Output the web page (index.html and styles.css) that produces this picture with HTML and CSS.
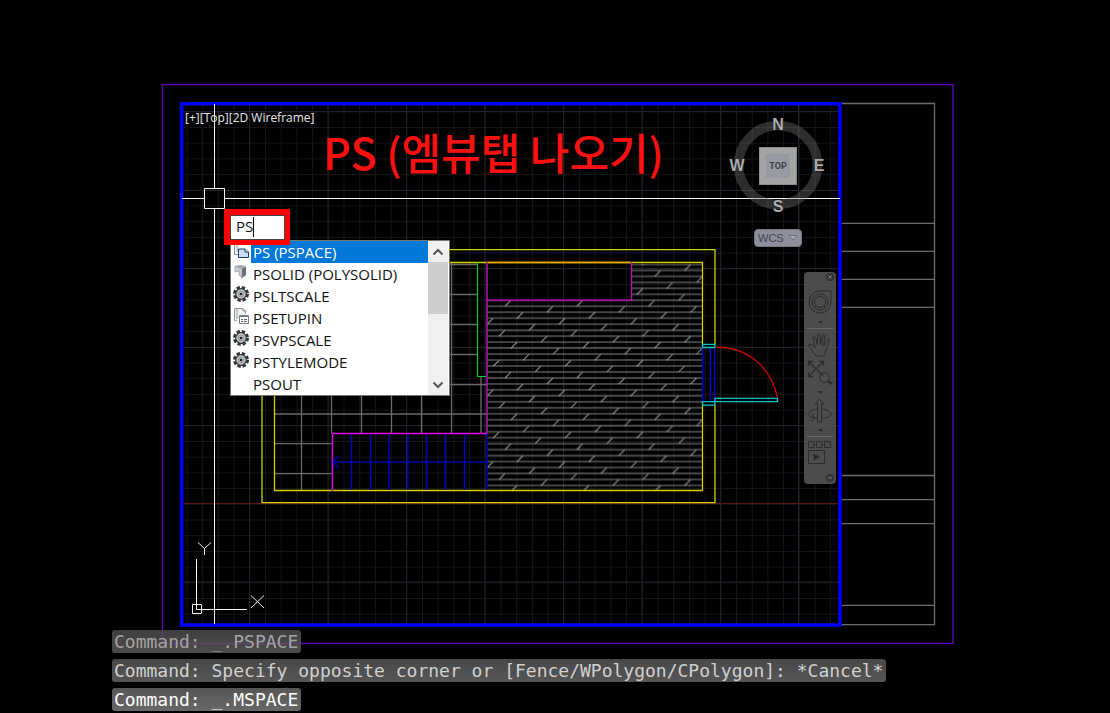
FILE: index.html
```html
<!DOCTYPE html>
<html lang="en">
<head>
<meta charset="utf-8">
<title>Layout viewport</title>
<link rel="stylesheet" href="styles.css">
</head>
<body>
<main class="stage">
  <svg class="drawing" aria-hidden="true">
    <defs>
      <pattern id="minor" x="186.5" y="111.3" width="15.7" height="15.7" patternUnits="userSpaceOnUse">
        <path d="M0 .5H15.7M.5 0V15.7" stroke="#15151b" stroke-width="1" fill="none"/>
      </pattern>
      <pattern id="planks" x="505" y="297.3" width="71.8" height="71.68" patternUnits="userSpaceOnUse">
        <g stroke="#848484" fill="none">
          <path stroke-width="1.4" d="M0 3H72M0 8.97H72M0 14.95H72M0 20.9H72M0 26.9H72M0 32.9H72M0 38.8H72M0 44.8H72M0 50.8H72M0 56.8H72M0 62.7H72M0 68.7H72"/>
          <path stroke="#a0a0a0" stroke-width="1.2" d="M0 9l6-6M41.9 15l6-6M12 21l6-6M53.9 27l6-6M24 33l6-6M65.8 39l6-6M36 45l6-6M6 51l6-6M47.9 57l6-6M18 63l6-6M59.9 69l6-6M30 74.700l6-6M30 3l6-6"/>
        </g>
      </pattern>
    </defs>

    <rect class="sheet" x="162.5" y="84.5" width="790.5" height="559"/>
    <path class="title-block" d="M842 103.5H934.5V624.7H842M842 223.3H934.5M842 251.3H934.5M842 279.3H934.5M842 307.3H934.5M842 475.5H934.5M842 499.7H934.5M842 523.7H934.5M842 605.3H934.5"/>

    <rect x="183" y="105" width="656" height="519" fill="url(#minor)"/>
    <path class="grid-major" d="M249.5 105V624M328 105V624M406.5 105V624M485 105V624M563.5 105V624M642 105V624M720.5 105V624M798.5 105V624M183 111.5H839M183 190.5H839M183 268.5H839M183 347.5H839M183 425.5H839M183 582H839"/>
    <path class="axis" d="M183 503.5H839"/>

    <path class="tile" d="M301.5 262V490M331.5 262V433M361.5 262V433M391.5 262V433M421.5 262V433M451.5 262V433M481 377V433M274 264.5H477M274 294.5H477M274 324.5H477M274 354.5H477M274 384.5H487M274 414H487M274 443.7H332M274 473.6H332"/>
    <path fill="url(#planks)" d="M487 300H631V264H702V490H487Z"/>
    <path class="wall" d="M715 344V249.7H262V502.7H715V405M702.5 344V262.5H274.5V490.5H702.5V405"/>
    <path class="lintel" d="M487 262.5H631"/>
    <path class="cabinet" d="M487 262V433M487 300.3H631.5V262"/>
    <path class="stair-edge" d="M487 433.5H332.4V491"/>
    <path class="stair" d="M351.5 434V490M370.5 434V490M389 434V490M407.8 434V490M426.5 434V490M445.5 434V490M464.5 434V490M487 434V490"/>
    <path class="stair-arrow" d="M487 462H333M339 456L333 462L339 468"/>
    <path class="panel" d="M477.5 262V376.5H486"/>
    <path class="leaf-jamb" d="M702.5 347V402M710.3 347V402M714.7 347V402"/>
    <path class="leaf" d="M702.5 344.3H714.8V347.5H702.5ZM702.5 401.7H714.8V405.2H702.5ZM715 398.3H777.5V401.6H715Z"/>
    <path class="swing" d="M715 347.3C748 346 772 369 777.5 398"/>

    <rect class="frame" x="181.7" y="103.7" width="658.3" height="521.3"/>
    <path class="cross" d="M214.5 104V188M214.5 209V624M182 198.5H204M225 198.5H840M204.5 188.5H224.5V208.5H204.5Z"/>
    <path class="cross" d="M192.5 604.5H201.5V613.5H192.5ZM196.5 559V609.5H247M198 542.5L204.5 548.5L211 542.5M204.5 548.5V555M251 595.5L264 608M264 595.5L251 608"/>
  </svg>

  <nav class="view-label" aria-label="Viewport controls"><button>[+]</button><button>[Top]</button><button>[2D Wireframe]</button></nav>
  <h1 class="caption">PS (엠뷰탭 나오기)</h1>

  <div class="compass">
    <svg class="ring" viewBox="0 0 90 90" aria-hidden="true"><circle cx="45" cy="45" r="39.5" fill="none" stroke="#777" stroke-opacity=".38" stroke-width="9.6"/></svg>
    <button class="dir north">N</button>
    <button class="dir west">W</button>
    <button class="cube"><span class="cube-face">TOP</span></button>
    <button class="dir east">E</button>
    <button class="dir south">S</button>
  </div>
  <button class="wcs">WCS <svg width="10" height="6" viewBox="0 0 10 6" aria-hidden="true"><path d="M1 .5H9L5 5Z" fill="#aaaab4" stroke="#70707c"/></svg></button>

  <aside class="navbar" aria-label="Navigation bar">
    <svg class="nav-art" viewBox="0 0 32 212" aria-hidden="true">
      <g fill="none" stroke="#2c2c2c" stroke-width="1">
        <circle cx="26" cy="5" r="3.6" fill="#3a3a3a"/><path stroke="#777" d="M24.5 3.500l3 3m0-3l-3 3"/>
        <path d="M16 19H27V30A11 11 0 1 1 16 19Z"/><circle cx="16" cy="30" r="8"/><circle cx="16" cy="30" r="5.500"/><path d="M10 36l2-2M22 36l-2-2"/>
        <path stroke="#686868" d="M3 56.500H29M3 164.500H29"/>
        <path d="M11 82C8 79 7 76 5 74C3.500 72 6 71.500 8 73L11 76L9 66C9 63.500 11 64 11.500 66L13.500 73L13.500 63C14 61 16 61 16 63L16.500 73L18.500 64C19 62 21 62.500 20.700 65L19.500 74L23 68C24.500 66 26.500 67 25.500 69L21.500 79C21 82 20 83 19.500 84H12Z"/>
        <path stroke-width="1.300" d="M5 90L19 104M19 90L5 104M4.500 94V89.500H9M15 89.500H19.500V94M4.500 100V104.500H9"/>
        <circle cx="20.500" cy="105.500" r="5"/><path stroke-width="2.500" d="M24 109L28 112"/>
        <path d="M13.500 150V132H11L15.500 127L20 132H17.500V150ZM13 137C7 138 4 140 4 142C5 145 10 146 13 146M18 137C24 138 27 140 27 142C26 145 22 146 18 146M7 141L11 146L7 149"/>
        <path d="M4.500 169.500H10V175.500H4.500ZM12.500 169.500H18V175.500H12.500ZM20.500 169.500H26.500V175.500H20.500ZM4.500 178.500H20.500V191.500H4.500Z"/>
        <circle cx="26" cy="206" r="3.600" fill="#3a3a3a"/><path stroke="#777" d="M24 206H28"/>
      </g>
      <path fill="#2a2a2a" d="M14 49h5l-2.500 3zM14 119h5l-2.500 3zM14 157h5l-2.500 3zM9.500 181.500l6.500 3.500l-6.500 3.500z"/>
    </svg>
  </aside>

  <section class="prompt" aria-label="Command entry">
    <div class="entry"><input class="entry-text" aria-label="Command" value="PS"><span class="caret"></span></div>
    <div class="suggest">
      <ul class="options">
        <li><button class="option selected"><svg class="icon" viewBox="0 0 16 16"><path d="M1.500 0V12.500H5M4 0V9.500" fill="none" stroke="#8b929b"/><path d="M5.500 7H12L15.500 10V15.500H5.500Z" fill="#c9defa" stroke="#1e355e"/><path d="M12 7V10H15.500" fill="#fff" stroke="#1e355e"/></svg><span>PS (PSPACE)</span></button></li>
        <li><button class="option"><svg class="icon" viewBox="0 0 16 16"><path d="M2 2L7 1L13 2L9 4.500V14L6 11V6L2 8Z" fill="#a4a9ae"/><path d="M9 4.500L13 2.500V11L9 14Z" fill="#686e76"/><path d="M2 2L9 4.500V14L6 11V7L2 8Z" fill="#c9ced3" stroke="#8d9298" stroke-width=".6"/></svg><span>PSOLID (POLYSOLID)</span></button></li>
        <li><button class="option"><svg class="icon" viewBox="0 0 16 16"><use href="#gear"/></svg><span>PSLTSCALE</span></button></li>
        <li><button class="option"><svg class="icon" viewBox="0 0 16 16"><path d="M3.500 12.500H1.500V.5H10L12.500 3V6M4 .5V11M10 .5V3H12.500" fill="#f2f3f4" stroke="#8b929b"/><path d="M6.500 7.500H15.500V15.500H6.500Z" fill="#fff" stroke="#737a84"/><path d="M6 8.500H16" stroke="#737a84"/><path d="M8 11.500H10M11 11.500H14M8 13.500H10M11 13.500H14" stroke="#555d68"/></svg><span>PSETUPIN</span></button></li>
        <li><button class="option"><svg class="icon" viewBox="0 0 16 16"><use href="#gear"/></svg><span>PSVPSCALE</span></button></li>
        <li><button class="option"><svg class="icon" viewBox="0 0 16 16"><use href="#gear"/></svg><span>PSTYLEMODE</span></button></li>
        <li><button class="option"><span class="icon"></span><span>PSOUT</span></button></li>
      </ul>
      <div class="scroll">
        <button class="scroll-step" aria-label="Scroll up"><svg width="12" height="8" viewBox="0 0 12 8"><path d="M1.500 6.500L6 2L10.500 6.500" fill="none" stroke="#555" stroke-width="2"/></svg></button>
        <div class="thumb"></div>
        <button class="scroll-step last" aria-label="Scroll down"><svg width="12" height="8" viewBox="0 0 12 8"><path d="M1.500 1.500L6 6L10.500 1.500" fill="none" stroke="#555" stroke-width="2"/></svg></button>
      </div>
    </div>
  </section>

  <svg class="symbols" aria-hidden="true"><defs><g id="gear"><circle cx="8" cy="8" r="6.400" fill="none" stroke="#333538" stroke-width="3.200" stroke-dasharray="3.200 1.826"/><circle cx="8" cy="8" r="5.300" fill="#c6c9cd" stroke="#333538" stroke-width="1.200"/><circle cx="8" cy="8" r="3" fill="#b4b7bb" stroke="#8d9094" stroke-width=".8"/><circle cx="8" cy="8" r="1.300" fill="#222"/></g></defs></svg>

  <div class="history">
    <output class="line old">Command: _.PSPACE</output>
    <output class="line recent">Command: Specify opposite corner or [Fence/WPolygon/CPolygon]: *Cancel*</output>
    <output class="line">Command: _.MSPACE</output>
  </div>
</main>
</body>
</html>
```

FILE: styles.css
```css
* { box-sizing: border-box; }
body { margin: 0; background: #000; color: #fff; font-family: "Open Sans", "Noto Sans CJK KR", sans-serif; }
button { margin: 0; padding: 0; border: 0; background: none; color: inherit; font: inherit; }

.stage { position: relative; display: flex; flex-direction: column; justify-content: flex-end; min-height: 100vh; overflow: hidden; }
.drawing { position: absolute; inset: 0; width: 100%; height: 100%; }
.drawing path, .drawing > rect { stroke-width: 1; }
.drawing > path:not([fill]), .sheet, .frame { fill: none; }
.drawing > .sheet { stroke: #6200b8; stroke-width: 1.4; }
.drawing > .title-block { stroke: #6c6c6c; stroke-width: 1.3; }
.grid-major { stroke: #20212b; }
.drawing > .axis { stroke: #5c1616; }
.drawing > .tile { stroke: #6a6a6a; stroke-width: 1.3; }
.drawing > .wall { stroke: #d2d200; stroke-width: 1.3; }
.drawing > .lintel { stroke: #f0a800; stroke-width: 1.4; }
.drawing > .cabinet { stroke: #b414b4; stroke-width: 1.5; }
.drawing > .stair-edge { stroke: #e400f0; stroke-width: 1.4; }
.drawing > .stair { stroke: #0000c8; stroke-width: 1.4; }
.drawing > .stair-arrow { stroke: #0000b0; stroke-width: 1.5; }
.drawing > .panel { stroke: #00d020; stroke-width: 1.2; }
.drawing > .leaf-jamb { stroke: #0000d8; stroke-width: 1.4; }
.drawing > .leaf { stroke: #00c8c8; stroke-width: 1.3; }
.drawing > .swing { stroke: #c80000; stroke-width: 1.3; }
.drawing > .frame { stroke: #00f; stroke-width: 3.5; }
.cross { stroke: #f4f4f4; }

.view-label { position: absolute; left: 185px; top: 110px; display: flex; font-size: 12px; line-height: 16px; color: #e8e8e8; }
.caption { position: absolute; left: 323px; top: 120px; margin: 0; font: 500 43px/62px "Noto Sans CJK KR", sans-serif; color: #ff1010; white-space: nowrap; }

.compass { position: absolute; left: 728px; top: 116px; display: grid; grid-template-columns: 18px 64px 18px; grid-template-rows: 18px 64px 18px; place-items: center; }
.ring { position: absolute; left: 5px; top: 4px; width: 90px; height: 90px; }
.dir { position: relative; font: bold 16px/18px "Liberation Sans", sans-serif; color: #acacac; text-shadow: 0 0 1px #000; }
.north { grid-area: 1 / 2; }
.west { grid-area: 2 / 1; }
.east { grid-area: 2 / 3; }
.south { grid-area: 3 / 2; }
.cube { grid-area: 2 / 2; position: relative; display: grid; place-items: center; width: 38px; height: 38px; background: #a4a4a4; border: 1px solid #8c8c8c; }
.cube-face { width: 24px; font: bold 9px/24px Roboto, sans-serif; background: #989aa2; color: #3c3e44; }
.wcs { position: absolute; left: 754px; top: 229px; display: flex; align-items: center; gap: 4px; padding: 0 3px; height: 18px; border: 1px solid #777783; border-radius: 4px; background: #8e8e9c; color: #45454e; font: 11px/16px "Liberation Sans", sans-serif; }

.navbar { position: absolute; left: 804px; top: 272px; width: 32px; border-radius: 4px; background: rgba(96, 96, 96, .78); }
.nav-art { display: block; width: 100%; }

.prompt { position: absolute; left: 224px; top: 209px; }
.entry { position: relative; z-index: 1; display: flex; width: 66px; height: 36px; border: 6px solid #f00; border-width: 6px 5px 5px 6px; }
.entry-text { width: 100%; margin: 0; padding: 0 5px 2px; border: 1px solid #444; border-radius: 0; outline: 0; background: #fff; color: #111; font: 15px/21px "Open Sans", sans-serif; }
.caret { position: absolute; left: 23px; top: 2px; width: 1px; height: 20px; background: #000; }
.suggest { display: flex; width: 220px; height: 156px; margin: -5px 0 0 6px; border: 1px solid #777; background: #fff; color: #111; overflow: hidden; }
.options { flex: 1; margin: 0; padding: 0; list-style: none; }
.option { display: flex; align-items: flex-start; width: 100%; height: 22px; font-size: 15px; line-height: 22px; white-space: nowrap; text-align: left; }
.option span { flex: 1; padding-left: 2px; }
.option .icon { flex: 0 0 16px; width: 16px; height: 16px; margin: 1px 2px; padding: 0; }
.selected { background: linear-gradient(90deg, #fff 20px, #0078d7 20px); color: #fff; }
.scroll { display: flex; flex-direction: column; width: 21px; background: #f0f0f0; border-right: 1px solid #fff; }
.scroll-step { display: grid; place-items: center; height: 21px; }
.thumb { height: 52px; background: #cdcdcd; }
.last { margin-top: auto; }
.symbols { position: absolute; width: 0; height: 0; }

.history { position: relative; display: flex; flex-direction: column; align-items: flex-start; gap: 6px; padding: 0 0 2px 112px; font: 18px/23px "DejaVu Sans Mono", monospace; }
.line { padding: 0 3px 0 2px; border-radius: 3px; background: linear-gradient(#565656, #686868); white-space: pre; }
.recent { background: linear-gradient(#484848, #565656); color: #d0d0d0; }
.old { background: linear-gradient(rgba(85, 85, 85, .75), rgba(95, 95, 95, .8)); color: #a4a4a4; }
```
